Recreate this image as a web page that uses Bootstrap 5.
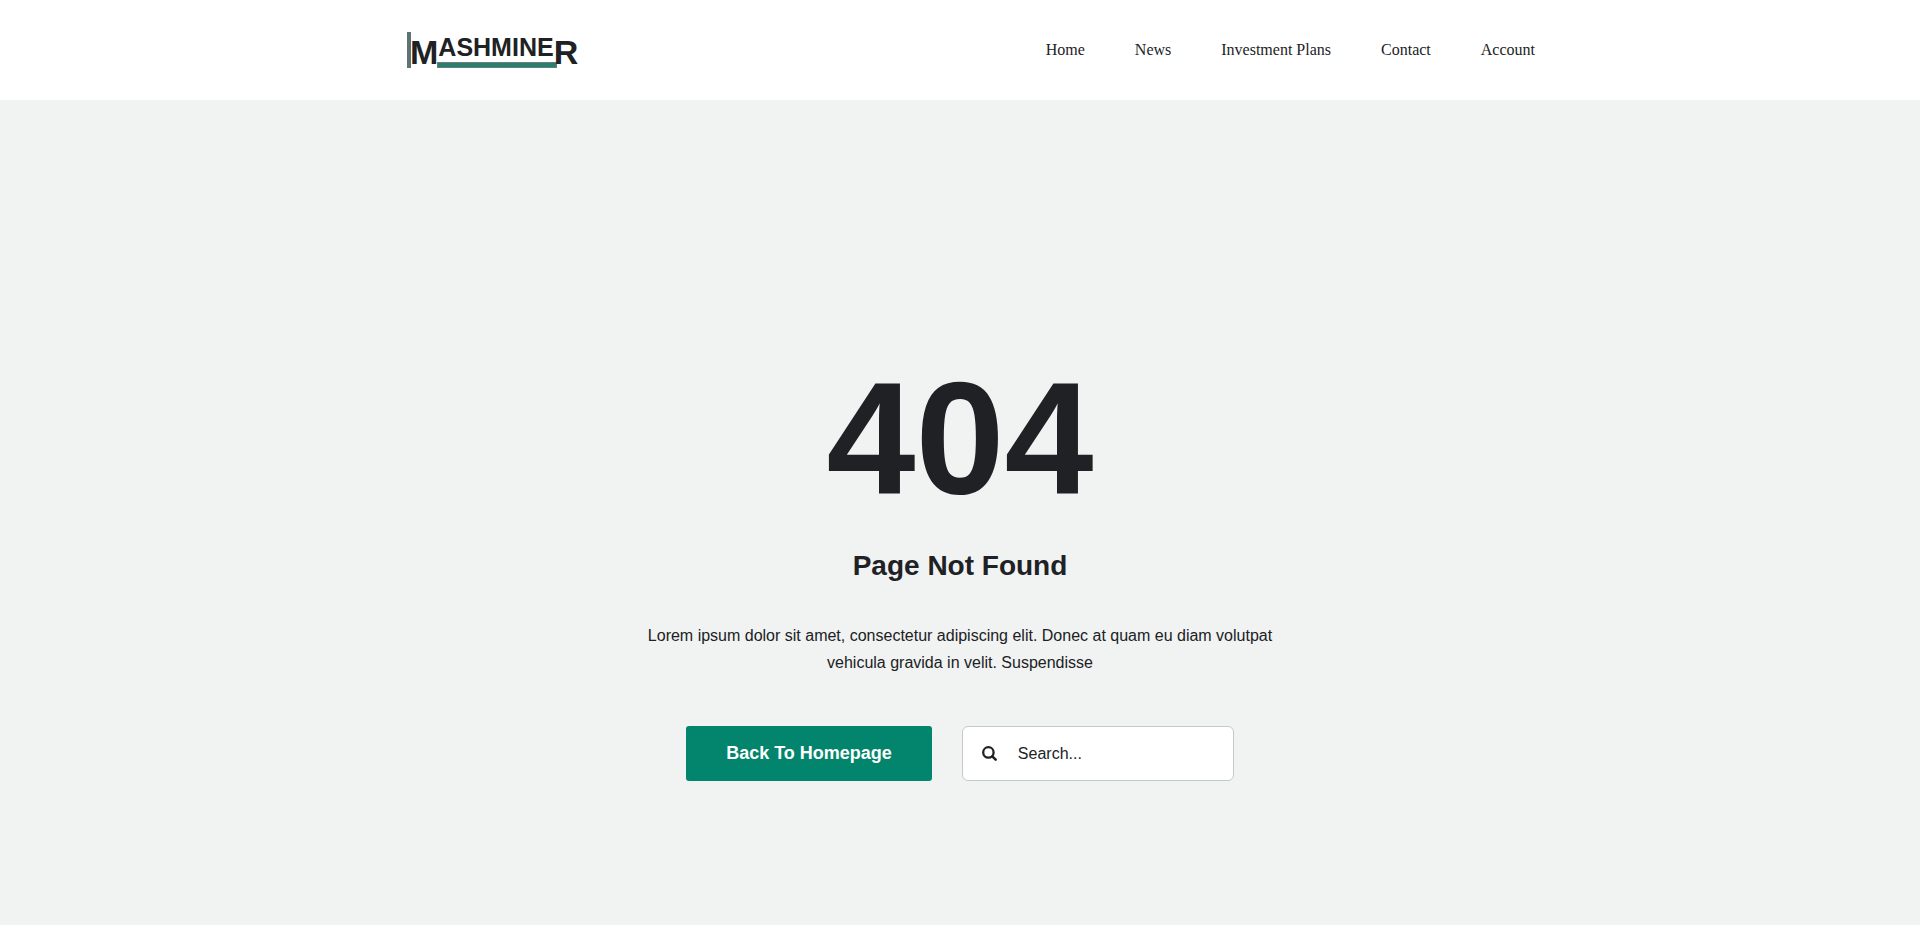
<!DOCTYPE html>
<html lang="en">
<head>
<meta charset="utf-8">
<meta name="viewport" content="width=device-width, initial-scale=1">
<title>Page Not Found - Mashminer</title>
<link href="https://cdn.jsdelivr.net/npm/bootstrap@5.3.0/dist/css/bootstrap.min.css" rel="stylesheet">
<style>
body { background: #f0f3f2; color: #202124; font: 16px/27px "Liberation Sans", Arial, sans-serif; }
.site-header { background: #fff; min-height: 100px; }
.site-width { max-width: 1174px; }
.site-menu { gap: 50px; font-family: "Liberation Serif", "Times New Roman", serif; line-height: 24px; }
.site-menu .nav-link { color: #212326; }
.logo-link { padding-left: 22px; }
.logo { display: block; font-weight: 700; }
.error-area { padding-top: 238px; padding-bottom: 120px; }
.error-code { font-size: 160px; line-height: 200px; font-weight: 700; }
.error-title { font-size: 28px; line-height: 36px; font-weight: 700; margin: 10px 0 38px; }
.error-text { max-width: 660px; margin-bottom: 50px; }
.error-actions { gap: 30px; }
.home-btn { --bs-btn-bg: #03846c; --bs-btn-color: #fff; --bs-btn-hover-bg: #026e5a; --bs-btn-hover-color: #fff; --bs-btn-border-radius: 3px; border: 0; font-size: 18px; line-height: 27px; font-weight: 700; padding: 14px 40px; }
.search-box { width: 272px; height: 55px; background: #fff; border: 1px solid #c4cac9; border-radius: 6px; padding-left: 19px; gap: 20px; }
.search-box input { color: #212326; padding: 0; box-shadow: none !important; }
.search-box input::placeholder { color: #212326; opacity: 1; }
</style>
</head>
<body>
<header class="site-header d-flex align-items-center">
  <div class="container-fluid site-width d-flex flex-wrap align-items-center justify-content-between">
    <a class="logo-link" href="#" aria-label="Mashminer">
      <svg class="logo" width="174" height="44" viewBox="0 -3 174 44" fill="#202124">
        <rect x="0" y="1" width="4" height="36" fill="#5f7373"/>
        <rect x="30" y="31" width="120" height="6" fill="#6e7b7a"/>
        <rect x="31" y="32" width="118" height="4" fill="#27806f"/>
        <text x="3" y="33" font-size="34">M<tspan y="25" font-size="25">ASHMINE</tspan><tspan y="33">R</tspan></text>
      </svg>
    </a>
    <nav aria-label="Main">
      <ul class="nav site-menu">
        <li><a class="nav-link p-0" href="#">Home</a></li>
        <li><a class="nav-link p-0" href="#">News</a></li>
        <li><a class="nav-link p-0" href="#">Investment Plans</a></li>
        <li><a class="nav-link p-0" href="#">Contact</a></li>
        <li><a class="nav-link p-0" href="#">Account</a></li>
      </ul>
    </nav>
  </div>
</header>
<main class="error-area container-fluid text-center">
  <h1 class="error-code mb-0">404</h1>
  <h2 class="error-title">Page Not Found</h2>
  <p class="error-text mx-auto">Lorem ipsum dolor sit amet, consectetur adipiscing elit. Donec at quam eu diam volutpat vehicula gravida in velit. Suspendisse</p>
  <div class="error-actions d-flex flex-wrap justify-content-center">
    <button type="button" class="btn home-btn">Back To Homepage</button>
    <form class="search-box d-flex align-items-center" role="search">
      <button type="submit" class="btn p-0 border-0 d-flex" aria-label="Search">
        <svg width="16" height="16" viewBox="0 0 16 16" fill="none" stroke="#202124"><circle cx="6.4" cy="6.4" r="5.2" stroke-width="2.3"/><path d="M10.3 10.3l3.4 3.4" stroke-width="2.5" stroke-linecap="round"/></svg>
      </button>
      <input type="search" class="form-control border-0 bg-transparent" placeholder="Search..." aria-label="Search">
    </form>
  </div>
</main>
<script src="https://cdn.jsdelivr.net/npm/bootstrap@5.3.0/dist/js/bootstrap.bundle.min.js"></script>
</body>
</html>
